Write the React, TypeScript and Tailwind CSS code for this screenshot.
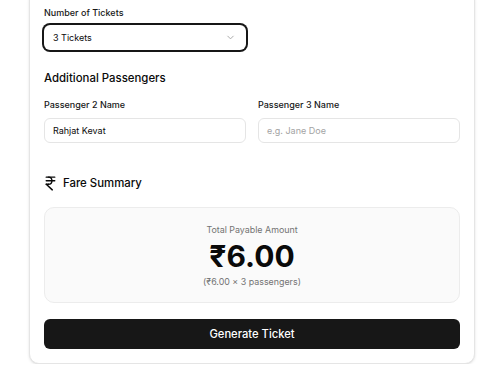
import React from "react";
import { ChevronDown, IndianRupee } from "lucide-react";

export default function App() {
  return (
    <div className="min-h-[373px] w-[500px] bg-white" style={{ fontFamily: "Inter, 'Noto Sans', sans-serif" }}>
      <div className="ml-[29px] mt-[-10px] w-[446px] rounded-[10px] border border-[#e5e5e5] bg-white px-[14px] pb-[14px] pt-[15px] text-[#0a0a0a] shadow-sm">
        <div className="flex flex-col">
          <div className="h-[14px] text-[9px] font-medium leading-[14px] text-[#171717]">Number of Tickets</div>
          <div className="mt-[5px] grid grid-cols-2 gap-[12px]">
            <div className="flex h-[25px] items-center justify-between rounded-[6px] bg-white pl-[9px] pr-[10px] ring-2 ring-[#171717]">
              <span className="text-[9px] leading-[14px] text-[#0a0a0a]">3 Tickets</span>
              <ChevronDown size={11} strokeWidth={2} className="text-[#a3a3a3]" />
            </div>
          </div>

          <div className="mt-[19px] h-[18px] text-[11.4px] font-medium leading-[18px]">Additional Passengers</div>

          <div className="mt-[11px] grid grid-cols-2 gap-[12px]">
            <div className="flex flex-col">
              <div className="h-[14px] text-[9px] font-medium leading-[14px] text-[#171717]">Passenger 2 Name</div>
              <div className="mt-[6px] flex h-[25px] items-center rounded-[6px] border border-[#e5e5e5] bg-white px-[8px]">
                <span className="text-[9px] leading-[14px] text-[#0a0a0a]">Rahjat Kevat</span>
              </div>
            </div>
            <div className="flex flex-col">
              <div className="h-[14px] text-[9px] font-medium leading-[14px] text-[#171717]">Passenger 3 Name</div>
              <div className="mt-[6px] flex h-[25px] items-center rounded-[6px] border border-[#e5e5e5] bg-white px-[8px]">
                <span className="text-[9px] leading-[14px] text-[#a3a3a3]">e.g. Jane Doe</span>
              </div>
            </div>
          </div>

          <div className="mt-[31px] flex h-[18px] items-center gap-[4px] ml-[-2px]">
            <IndianRupee size={17} strokeWidth={2} className="text-[#0a0a0a]" />
            <span className="text-[11.4px] font-medium leading-[18px]">Fare Summary</span>
          </div>

          <div className="mt-[15px] flex h-[96px] flex-col items-center rounded-[10px] border border-[#ececec] bg-[#fafafa] pt-[15px]">
            <div className="h-[14px] text-[8.9px] leading-[14px] text-[#737373]">Total Payable Amount</div>
            <div className="mt-[3px] h-[32px] text-[30px] font-bold leading-[32px] text-[#0a0a0a]">₹6.00</div>
            <div className="mt-[4px] h-[12px] text-[8.9px] leading-[12px] text-[#737373]">(₹6.00 × 3 passengers)</div>
          </div>

          <div className="mt-[16px] flex h-[30px] items-center justify-center rounded-[6px] bg-[#171717]">
            <span className="text-[11.2px] font-medium leading-[16px] text-white">Generate Ticket</span>
          </div>
        </div>
      </div>
    </div>
  );
}
